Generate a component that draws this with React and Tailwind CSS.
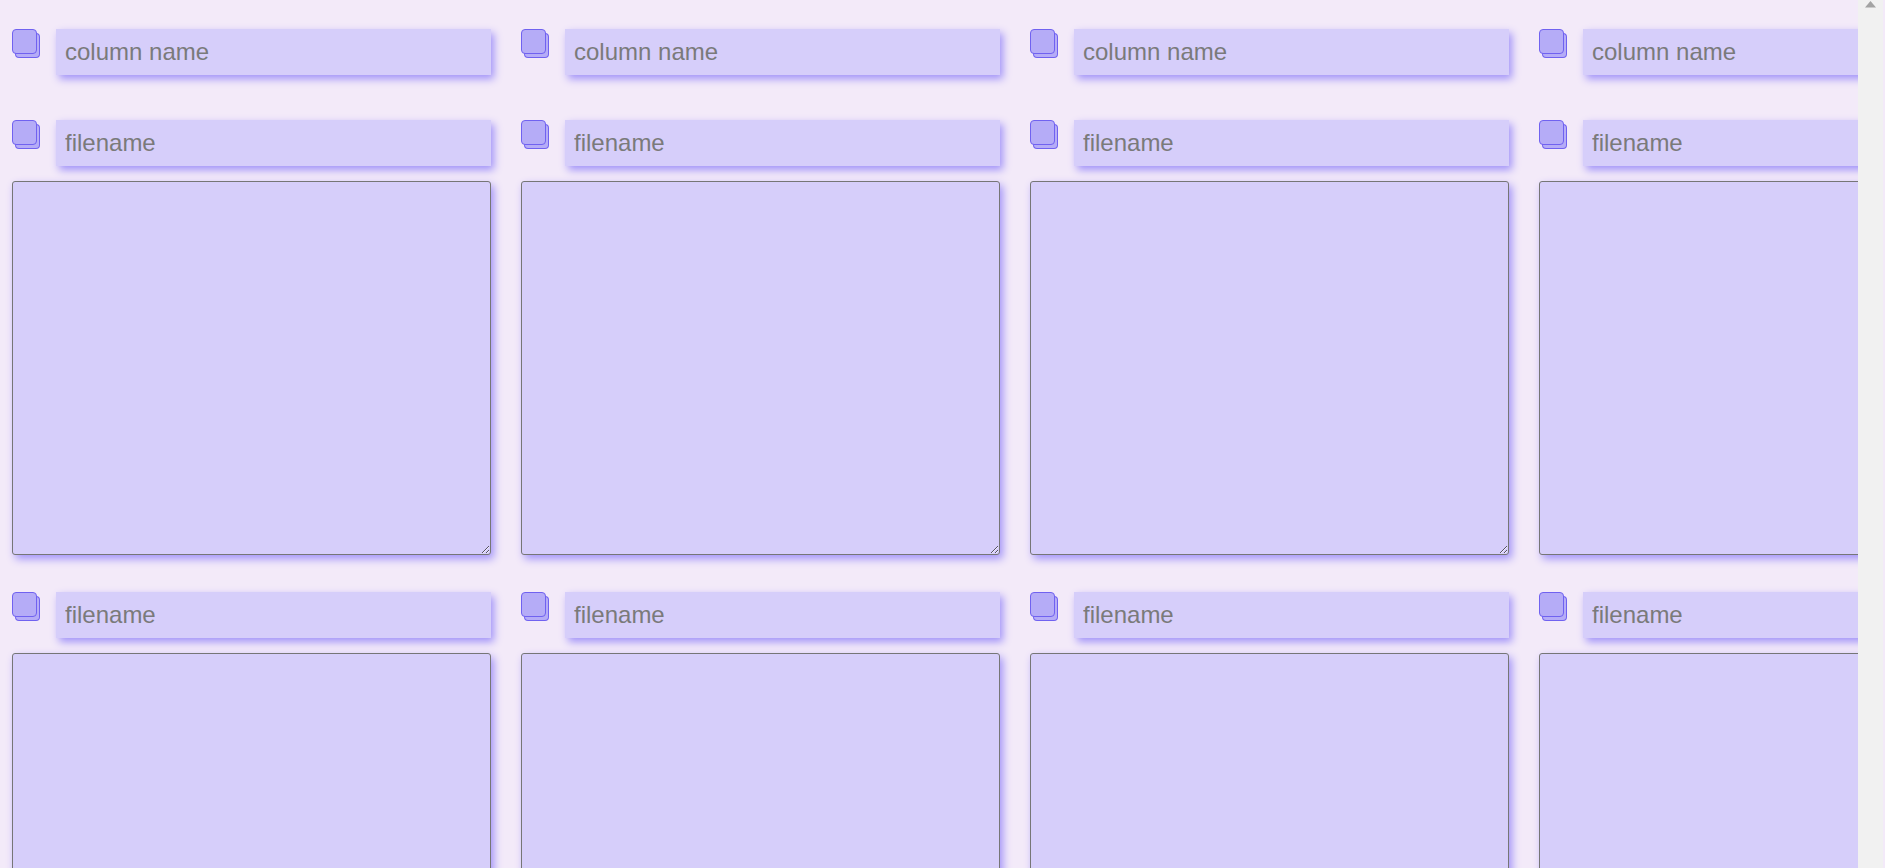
const columns = [0, 1, 2, 3];
const fileRows = [0, 1];

function Check() {
  return (
    <div className="w-[25px] h-[25px] shrink-0 rounded-[4px] border border-[#7062f0] bg-[#b5acf7] shadow-[3px_4px_0_-1px_#b5acf7,3px_4px_0_0_#7062f0]" />
  );
}

function NameField({ placeholder }) {
  return (
    <div className="flex items-start gap-[19px] w-[479px] shrink-0">
      <Check />
      <input
        type="text"
        placeholder={placeholder}
        className="w-[435px] h-[46px] px-[9px] bg-[#d6cefa] text-[24px] text-[#444] placeholder:text-[#7a7a7a] font-['Liberation_Sans',Arial,sans-serif] outline-none shadow-[3px_4px_8px_#a193f8]"
      />
    </div>
  );
}

function Scrollbar() {
  return (
    <div className="flex shrink-0">
      <div className="w-[25px] h-full bg-[#f1f1f1] flex justify-center pt-[1px]">
        <svg width="11" height="7" viewBox="0 0 11 7">
          <path d="M5.5 0 L11 6.5 L0 6.5 Z" fill="#a3a3a3" />
        </svg>
      </div>
      <div className="w-[2px] bg-[#f3eaf9]" />
    </div>
  );
}

export default function App() {
  return (
    <div className="flex h-[868px] w-[1885px] overflow-hidden bg-[#f3eaf9] font-['Liberation_Sans',Arial,sans-serif]">
      <div className="flex-1 overflow-hidden pl-[12px] pt-[29px]">
        <div className="flex gap-[30px]">
          {columns.map((c) => (
            <NameField key={c} placeholder="column name" />
          ))}
        </div>

        <div className="mt-[45px] flex flex-col gap-[37px]">
          {fileRows.map((r) => (
            <div key={r} className="flex flex-col gap-[15px]">
              <div className="flex gap-[30px]">
                {columns.map((c) => (
                  <NameField key={c} placeholder="filename" />
                ))}
              </div>
              <div className="flex gap-[30px]">
                {columns.map((c) => (
                  <textarea
                    key={c}
                    className="block w-[479px] h-[374px] shrink-0 rounded-[3px] border border-[#767676] bg-[#d6cefa] resize shadow-[3px_4px_8px_#a193f8] outline-none"
                  />
                ))}
              </div>
            </div>
          ))}
        </div>
      </div>
      <Scrollbar />
    </div>
  );
}
